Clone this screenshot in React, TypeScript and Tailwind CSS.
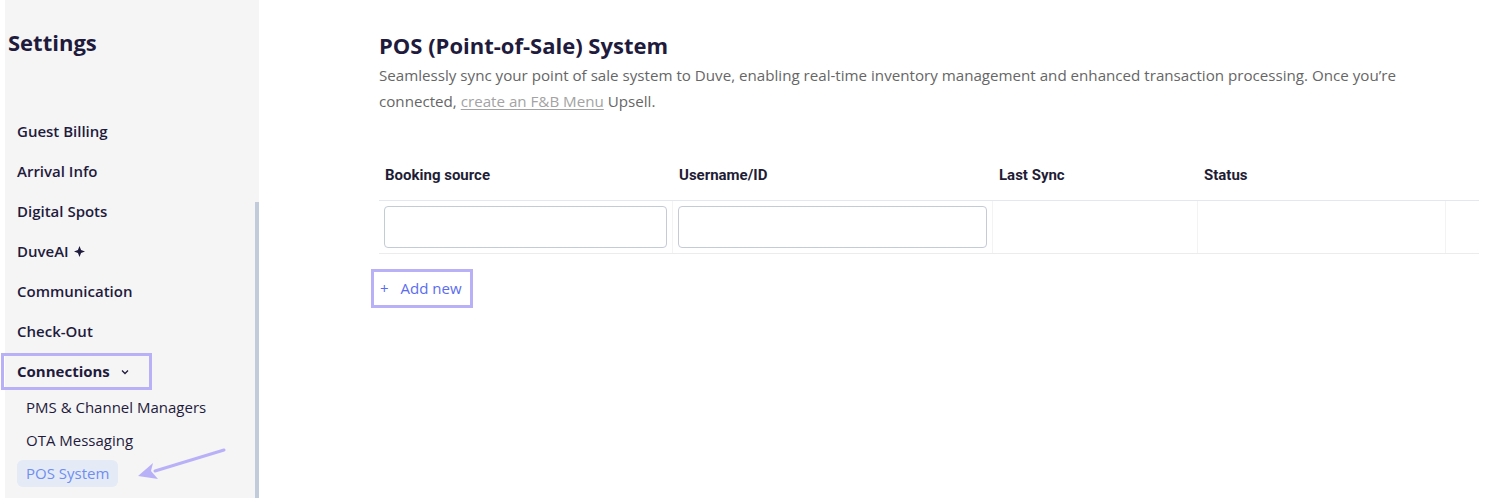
const navItems = [
  "Guest Billing",
  "Arrival Info",
  "Digital Spots",
  "DuveAI",
  "Communication",
  "Check-Out",
];

const subItems = ["PMS & Channel Managers", "OTA Messaging", "POS System"];

const columns = [
  { label: "Booking source", width: "w-[294px]", input: true },
  { label: "Username/ID", width: "w-[320px]", input: true },
  { label: "Last Sync", width: "w-[205px]", input: false },
  { label: "Status", width: "w-[248px]", input: false },
];

function Sparkle() {
  return (
    <svg width="11" height="11" viewBox="0 0 12 12" className="ml-[5px]">
      <path d="M6 0 L7.7 4.3 L12 6 L7.7 7.7 L6 12 L4.3 7.7 L0 6 L4.3 4.3 Z" fill="#1f1b3d" />
    </svg>
  );
}

function Sidebar() {
  return (
    <aside className="relative ml-[5px] h-[498px] w-[254px] shrink-0 bg-[#f5f5f5] font-['Open_Sans',sans-serif] text-[#1f1b3d]">
      <h1 className="pl-[3px] pt-[27px] text-[22px] font-bold leading-[30px]">Settings</h1>

      <nav className="mt-[54px] flex flex-col">
        {navItems.map((item) => (
          <div key={item} className="flex h-10 items-center pl-[12px] text-[15px] font-semibold">
            {item}
            {item === "DuveAI" && <Sparkle />}
          </div>
        ))}
        <div className="relative flex h-10 items-center pl-[12px] text-[15px] font-bold">
          Connections
          <svg width="8" height="6" viewBox="0 0 8 6" className="ml-[11px] mt-[1px]">
            <path d="M1 1.5 L4 4.5 L7 1.5" fill="none" stroke="#1f1b3d" strokeWidth="1.3" />
          </svg>
          <span className="absolute left-[-4px] top-[2px] h-[37px] w-[151px] border-[3px] border-[#b9b1f8]" />
        </div>
        {subItems.map((item) => (
          <div key={item} className="flex h-[33px] items-center pl-[12px] text-[15px]">
            {item === "POS System" ? (
              <span className="rounded-md bg-[#e4ebf6] px-[9px] py-[2px] text-[#6f8ef2]">{item}</span>
            ) : (
              <span className="pl-[9px]">{item}</span>
            )}
          </div>
        ))}
      </nav>

      {/* pointer arrow toward the active item */}
      <svg width="96" height="40" viewBox="0 0 96 40" className="absolute left-[128px] top-[444px]">
        <path d="M91 6 L22 27" stroke="#b9b1f8" strokeWidth="3" strokeLinecap="round" />
        <path d="M5 32 L20 19 L18 27 L25 35 Z" fill="#b9b1f8" />
      </svg>

      <div className="absolute right-0 top-[202px] bottom-0 w-[4px] bg-[#c1cbda]" />
    </aside>
  );
}

export default function App() {
  return (
    <div className="flex h-[498px] w-[1508px] overflow-hidden bg-white">
      <Sidebar />

      <main className="ml-[120px] w-[1100px] font-['Open_Sans',sans-serif]">
        <h2 className="pt-[30px] text-[22px] font-bold leading-[30px] text-[#1f1b3d]">
          POS (Point-of-Sale) System
        </h2>
        <p className="mt-[2px] max-w-[1070px] text-[15.15px] leading-[26px] text-[#666666]">
          Seamlessly sync your point of sale system to Duve, enabling real-time inventory management and
          enhanced transaction processing. Once you’re connected,{" "}
          <a className="text-[#a3a3a3] underline underline-offset-2">create an F&amp;B Menu</a> Upsell.
        </p>

        <div className="mt-[36px] font-['Roboto',sans-serif]">
          <div className="flex h-[51px] items-center border-b border-[#e3e7ee]">
            {columns.map((col) => (
              <div key={col.label} className={`${col.width} px-[6px] pt-[1px] text-[15px] font-bold text-[#1f1d36]`}>
                {col.label}
              </div>
            ))}
          </div>
          <div className="flex border-b border-[#ececec]">
            {columns.map((col) => (
              <div key={col.label} className={`${col.width} border-r border-[#f3f3f3] px-[5px] py-[5px]`}>
                {col.input ? (
                  <input className="h-[42px] w-full rounded-[4px] border border-[#c3cbd6] bg-white outline-none" />
                ) : (
                  <div className="h-[42px]" />
                )}
              </div>
            ))}
            <div className="flex-1" />
          </div>
        </div>

        <button className="ml-[-8px] mt-[15px] flex h-[39px] items-center border-[3px] border-[#b9b1f8] pl-[6px] pr-[8px] text-[15px] text-[#5b6cf1]">
          <span className="mr-[12px]">+</span>
          Add new
        </button>
      </main>
    </div>
  );
}
